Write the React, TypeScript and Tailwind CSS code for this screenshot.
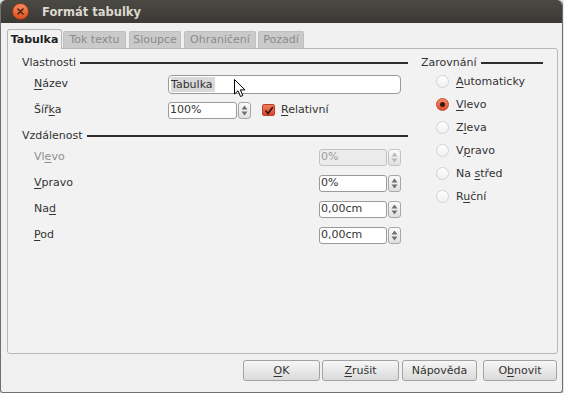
import React from "react";

function U({ children }: { children: React.ReactNode }) {
  return <span className="underline underline-offset-[2px] decoration-[1px]">{children}</span>;
}

function Spin({ disabled }: { disabled?: boolean }) {
  const c = disabled ? "#b8b8b8" : "#707070";
  return (
    <div className={`w-[13px] h-full rounded-[3px] border ${disabled ? "border-[#c4c4c4]" : "border-[#a6a6a6]"} bg-gradient-to-b from-[#fbfbfb] to-[#e0e0e0] flex items-center justify-center`}>
      <svg width="7" height="11" viewBox="0 0 7 11">
        <path d="M3.5 0.5 L6.5 4.5 H0.5Z" fill={c} />
        <path d="M3.5 10.5 L6.5 6.5 H0.5Z" fill={c} />
      </svg>
    </div>
  );
}

function SpinField({ value, width, disabled }: { value: string; width: number; disabled?: boolean }) {
  return (
    <div className="flex h-[17px] gap-[1px]">
      <div
        style={{ width }}
        className={`h-full rounded-[3px] border flex items-center pl-[1px] ${
          disabled ? "border-[#c2c2c2] bg-[#ececec] text-[#9a9a9a]" : "border-[#9a9a9a] bg-white text-[#333]"
        }`}
      >
        {value}
      </div>
      <Spin disabled={disabled} />
    </div>
  );
}

function Heading({ text }: { text: string }) {
  return (
    <div className="h-[14px] flex items-center gap-[4px] text-[#333]">
      <span>{text}</span>
      <div className="flex-1 h-[2px] bg-[#2e2e2e]" />
    </div>
  );
}

function Radio({ checked, children }: { checked?: boolean; children: React.ReactNode }) {
  return (
    <div className="h-[23px] flex items-center pl-[15px] gap-[7px] text-[#333]">
      {checked ? (
        <div className="w-[13px] h-[13px] rounded-full border border-[#c24a2c] bg-gradient-to-b from-[#f58a6a] to-[#de4d2b] flex items-center justify-center">
          <div className="w-[5px] h-[5px] rounded-full bg-[#3a1a12]" />
        </div>
      ) : (
        <div className="w-[13px] h-[13px] rounded-full border border-[#d2d2d2] bg-gradient-to-b from-white to-[#f0f0f0]" />
      )}
      <span>{children}</span>
    </div>
  );
}

function Btn({ children, w }: { children: React.ReactNode; w: string }) {
  return (
    <div
      className={`${w} h-[21px] rounded-[3px] border border-[#a3a3a3] bg-gradient-to-b from-[#f7f7f7] to-[#dadada] flex items-center justify-center text-[#333]`}
    >
      {children}
    </div>
  );
}

export default function App() {
  return (
    <div className="w-[564px] h-[393px] bg-[#e8e8e8] font-['DejaVu_Sans','Liberation_Sans',sans-serif] text-[11px] leading-[14px] overflow-hidden">
      <div className="w-[563px] h-[393px] flex flex-col rounded-t-[5px] rounded-b-[3px] border border-[#6f6f6f] border-t-0 bg-[#f0f0f0] overflow-hidden">
        {/* title bar */}
        <div className="h-[23px] shrink-0 bg-gradient-to-b from-[#4a4944] to-[#3a3935] flex items-center pl-[11px] gap-[13px] rounded-t-[5px]">
          <div className="w-[17px] h-[17px] rounded-full bg-gradient-to-b from-[#f6895a] to-[#dc4f1d] border border-[#8a3a1a] flex items-center justify-center">
            <svg width="7" height="7" viewBox="0 0 7 7">
              <path d="M1 1 L6 6 M6 1 L1 6" stroke="#4a2412" strokeWidth="1.6" strokeLinecap="round" />
            </svg>
          </div>
          <span className="text-[#dcd8cf] font-bold text-[11.5px]">Formát tabulky</span>
        </div>

        {/* body */}
        <div className="flex-1 flex flex-col pl-[6px] pr-[5px]">
          {/* tabs */}
          <div className="h-[25px] flex items-end">
            <div className="w-[55px] h-[20px] border border-b-0 border-[#b6b6b6] rounded-t-[3px] bg-[#f2f2f2] flex items-center justify-center font-bold text-[#222] relative top-[1px] z-10">
              Tabulka
            </div>
            <div className="ml-[1px] w-[63px] h-[17px] rounded-t-[2px] bg-[#cacaca] border border-b-0 border-[#c0c0c0] flex items-center justify-center text-[#8a8a8a]">
              Tok textu
            </div>
            <div className="ml-[3px] w-[52px] h-[17px] rounded-t-[2px] bg-[#cacaca] border border-b-0 border-[#c0c0c0] flex items-center justify-center text-[#8a8a8a]">
              Sloupce
            </div>
            <div className="ml-[3px] w-[72px] h-[17px] rounded-t-[2px] bg-[#cacaca] border border-b-0 border-[#c0c0c0] flex items-center justify-center text-[#8a8a8a]">
              Ohraničení
            </div>
            <div className="ml-[2px] w-[46px] h-[17px] rounded-t-[2px] bg-[#cacaca] border border-b-0 border-[#c0c0c0] flex items-center justify-center text-[#8a8a8a]">
              Pozadí
            </div>
          </div>

          {/* panel */}
          <div className="w-[551px] h-[306px] border border-[#b8b8b8] rounded-b-[3px] rounded-tr-[3px] bg-[#f2f2f2] flex pl-[14px] pt-[7px] gap-[13px]">
            {/* left column */}
            <div className="w-[386px] flex flex-col">
              <Heading text="Vlastnosti" />
              <div className="mt-[1px] h-[26px] flex items-center pl-[12px] text-[#333]">
                <div className="w-[134px]">
                  <U>N</U>ázev
                </div>
                <div className="relative w-[233px] h-[19px] rounded-[4px] border border-[#9a9a9a] bg-white flex items-center pl-[2px]">
                  <span className="bg-[#d9d9d9] text-[#333] leading-[15px] pr-[2px]">Tabulka</span>
                  <svg className="absolute left-[65px] top-[3px]" width="12" height="19" viewBox="0 0 12 19">
                    <path d="M0.5 0.5 L0.5 15 L4 11.8 L6.5 17.5 L8.8 16.5 L6.4 10.9 L11 10.9 Z" fill="white" stroke="black" strokeWidth="1" strokeLinejoin="round" />
                  </svg>
                </div>
              </div>
              <div className="h-[26px] flex items-center pl-[12px] text-[#333]">
                <div className="w-[134px]">
                  Šíř<U>k</U>a
                </div>
                <SpinField value="100%" width={69} />
                <div className="ml-[11px] w-[13px] h-[12px] rounded-[2px] border border-[#b8422a] bg-gradient-to-b from-[#f47b60] to-[#d9462a] flex items-center justify-center">
                  <svg width="10" height="9" viewBox="0 0 10 9">
                    <path d="M1.5 4.5 L4 7.5 L8.8 1" fill="none" stroke="#3b1208" strokeWidth="1.7" />
                  </svg>
                </div>
                <span className="ml-[6px]">
                  <U>R</U>elativní
                </span>
              </div>
              <div className="mt-[6px]">
                <Heading text="Vzdálenost" />
              </div>
              <div className="mt-[1px] h-[26px] flex items-center pl-[12px] text-[#8e8e8e]">
                <div className="w-[285px]">
                  Vl<U>e</U>vo
                </div>
                <SpinField value="0%" width={68} disabled />
              </div>
              <div className="h-[26px] flex items-center pl-[12px] text-[#333]">
                <div className="w-[285px]">
                  <U>V</U>pravo
                </div>
                <SpinField value="0%" width={68} />
              </div>
              <div className="h-[26px] flex items-center pl-[12px] text-[#333]">
                <div className="w-[285px]">
                  Na<U>d</U>
                </div>
                <SpinField value="0,00cm" width={68} />
              </div>
              <div className="h-[26px] flex items-center pl-[12px] text-[#333]">
                <div className="w-[285px]">
                  <U>P</U>od
                </div>
                <SpinField value="0,00cm" width={68} />
              </div>
            </div>

            {/* right column */}
            <div className="w-[122px] flex flex-col">
              <Heading text="Zarovnání" />
              <Radio>
                <U>A</U>utomaticky
              </Radio>
              <Radio checked>
                <U>V</U>levo
              </Radio>
              <Radio>
                Z<U>l</U>eva
              </Radio>
              <Radio>
                V<U>p</U>ravo
              </Radio>
              <Radio>
                Na <U>s</U>třed
              </Radio>
              <Radio>
                R<U>u</U>ční
              </Radio>
            </div>
          </div>

          {/* buttons */}
          <div className="mt-[6px] flex justify-end">
            <Btn w="w-[77px]">
              <U>O</U>K
            </Btn>
            <div className="w-[2px]" />
            <Btn w="w-[77px]">
              <U>Z</U>rušit
            </Btn>
            <div className="w-[3px]" />
            <Btn w="w-[75px]">Nápověda</Btn>
            <div className="w-[6px]" />
            <Btn w="w-[74px]">
              O<U>b</U>novit
            </Btn>
          </div>
        </div>
      </div>
    </div>
  );
}
